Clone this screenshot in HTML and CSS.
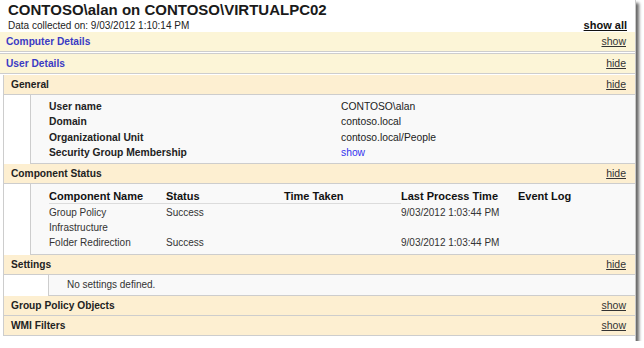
FILE: index.html
```html
<!DOCTYPE html>
<html>
<head>
    <title>Group Policy Results</title>
    <link rel="stylesheet" href="styles.css">
</head>
<body>
<div class="frame">
    <!-- Report header -->
    <div class="head">
        <div class="title">CONTOSO\alan on CONTOSO\VIRTUALPC02</div>
        <div class="sub">
            <span>Data collected on: 9/03/2012 1:10:14 PM</span>
            <a class="toggle all">show all</a>
        </div>
    </div>

    <div class="bar top first"><span>Computer Details</span><a class="toggle">show</a></div>
    <div class="bar top"><span>User Details</span><a class="toggle">hide</a></div>

    <div class="nest">
        <div class="bar"><span>General</span><a class="toggle">hide</a></div>
        <div class="body general">
            <div class="label">User name</div><div>CONTOSO\alan</div>
            <div class="label">Domain</div><div>contoso.local</div>
            <div class="label">Organizational Unit</div><div>contoso.local/People</div>
            <div class="label">Security Group Membership</div><div><a class="link">show</a></div>
        </div>

        <div class="bar"><span>Component Status</span><a class="toggle">hide</a></div>
        <div class="body status">
            <div class="row th">
                <div>Component Name</div><div>Status</div><div>Time Taken</div><div>Last Process Time</div><div>Event Log</div>
            </div>
            <div class="row">
                <div>Group Policy<br>Infrastructure</div><div>Success</div><div></div><div>9/03/2012 1:03:44 PM</div><div></div>
            </div>
            <div class="row">
                <div>Folder Redirection</div><div>Success</div><div></div><div>9/03/2012 1:03:44 PM</div><div></div>
            </div>
        </div>

        <div class="bar"><span>Settings</span><a class="toggle">hide</a></div>
        <div class="body settings">No settings defined.</div>

        <div class="bar"><span>Group Policy Objects</span><a class="toggle">show</a></div>
        <div class="bar"><span>WMI Filters</span><a class="toggle">show</a></div>
    </div>
</div>
</body>
</html>
```

FILE: styles.css
```css
body {
    margin: 0;
    background: #ffffff;
    font-family: 'Liberation Sans', Arial, sans-serif;
    font-size: 10px;
    color: #222;
}

.frame {
    width: 635px;
    height: 341px;
    background: #ffffff;
    border-right: 1px solid #c9c9c9;
    box-shadow: 3px 3px 3px rgba(0, 0, 0, 0.6);
    overflow: hidden;
}

.head {
    padding: 0 8px;
}

.title {
    font-size: 15px;
    font-weight: bold;
    line-height: 19px;
    color: #1a1a1a;
}

.sub {
    display: flex;
    justify-content: space-between;
    align-items: flex-end;
    height: 13px;
    line-height: 13px;
}

.toggle {
    color: #333;
    font-size: 10.5px;
    text-decoration: underline;
}

.all {
    font-size: 11px;
    font-weight: bold;
    color: #111;
}

/* section headers */
.bar {
    display: flex;
    justify-content: space-between;
    height: 19px;
    line-height: 19px;
    padding: 0 9px 0 7px;
    background: #fdefd1;
    border-bottom: 1px solid #cdcdcd;
    font-size: 10.2px;
    font-weight: bold;
}

.bar .toggle {
    font-weight: normal;
}

.bar.top {
    padding-left: 6px;
    background: #fcf5d7;
    color: #3b3bc4;
    border-top: 1px solid #cdcdcd;
}

.bar.first {
    border-top: none;
    margin-bottom: 1px;
}

.nest {
    margin-top: 1px;
    margin-left: 3px;
    border-left: 1px solid #cdcdcd;
}

.body {
    background: #f9f9f9;
    border-bottom: 1px solid #cdcdcd;
}

.general {
    display: grid;
    grid-template-columns: 292px 1fr;
    line-height: 15.25px;
    margin-left: 26px;
    border-left: 1px solid #cdcdcd;
    padding: 4px 0 3px 18px;
    font-size: 10.3px;
}

.label {
    font-weight: bold;
}

.link {
    color: #3333ee;
}

.status {
    margin-left: 26px;
    border-left: 1px solid #cdcdcd;
    padding: 5px 0 4px 18px;
    color: #333;
}

.row {
    display: grid;
    grid-template-columns: 117px 118px 117px 117px 1fr;
    line-height: 15px;
}

.row.th {
    font-size: 11px;
    font-weight: bold;
    color: #111;
    line-height: 14px;
    margin-bottom: 1px;
}

.row.th div:nth-child(-n+3) {
    border-bottom: 1px solid #dcdcdc;
}

.settings {
    margin-left: 44px;
    border-left: 1px solid #cdcdcd;
    padding-left: 18px;
    line-height: 20px;
    color: #333;
}
```
